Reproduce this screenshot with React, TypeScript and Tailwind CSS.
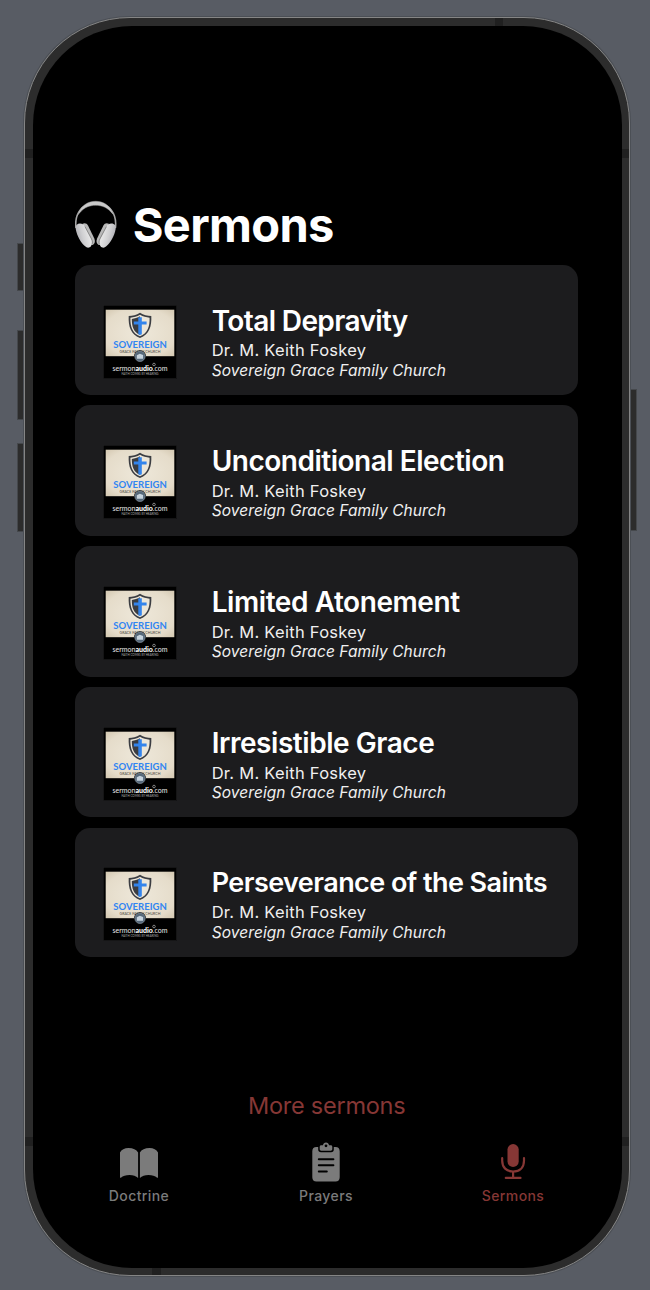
import React from "react";

const regular = "text-[28px] leading-[32px]";

const sermons = [
  { title: "Total Depravity", text: regular + " tracking-[-0.62px]", height: "h-[130.500px] pt-[40px]" },
  { title: "Unconditional Election", text: regular + " tracking-[-0.49px]", height: "h-[130.500px] pt-[40px]" },
  { title: "Limited Atonement", text: regular + " tracking-[-0.43px]", height: "h-[130.500px] pt-[40px]" },
  { title: "Irresistible Grace", text: regular + " tracking-[-0.45px]", height: "h-[130.500px] pt-[40px]" },
  { title: "Perseverance of the Saints", text: "text-[27px] leading-[32px] tracking-[-0.560px]", height: "h-[129.500px] pt-[39px]" },
];

function Cup() {
  return (
    <g>
      <path d="M7.500 23.800c2.200-1.300 4.200-.6 5.500 1.600l6.200 12.800c1.200 2.800.8 5-.8 6.200-1.700 1.200-3.700.5-5-1.500z" fill="#b9b9b9" />
      <path d="M.8 29.200c-.9-3.300 1-5.700 4.200-5.700 2.300 0 3.700 1 4.700 2.800l6.300 12.200c1.500 2.900 1.400 5.600-.1 7.700-1.500 1.900-4 1.900-5.800.1C5.600 42.300 2 35.800.8 29.200z" fill="url(#cup)" />
      <path d="M10 26.600 16.500 38.900c1.100 2.200 1.100 4 .4 5.500" fill="none" stroke="#777" strokeWidth=".8" />
    </g>
  );
}

function Headphones() {
  return (
    <svg className="h-[50px] w-[43px] shrink-0" viewBox="0 0 43 50" fill="none">
      <defs>
        <linearGradient id="cup" x1="0" y1=".6" x2=".8" y2=".3">
          <stop offset="0" stopColor="#a9a9af" />
          <stop offset="0.5" stopColor="#cfcfd1" />
          <stop offset="1" stopColor="#e8e8e8" />
        </linearGradient>
      </defs>
      <path d="M1 28C-.8 14 7 3 20.700 3S42.200 14 40.400 28" stroke="#a5a5a5" strokeWidth="1.600" />
      <path d="M3 14.500C6 5.500 13 1.300 20.700 1.300s14.700 4.200 17.700 13.200l-2.300-2.200C32.500 7.500 26.800 5.300 20.700 5.300S8.900 7.500 5.300 12.300z" fill="#c9c9c9" stroke="#a2a2a2" strokeWidth=".5" />
      <Cup />
      <g transform="translate(41.400 0) scale(-1 1)">
        <Cup />
      </g>
    </svg>
  );
}

function Artwork() {
  return (
    <svg className="h-[74px] w-[74px] shrink-0" viewBox="0 0 74 74">
      <defs>
        <radialGradient id="paper" r=".75">
          <stop offset="0" stopColor="#eee8da" />
          <stop offset=".7" stopColor="#e5dcca" />
          <stop offset="1" stopColor="#cfc3ab" />
        </radialGradient>
      </defs>
      <rect x=".3" y=".3" width="73.400" height="73.400" fill="#000" stroke="#222224" strokeWidth=".5" />
      <rect x="2.700" y="4.700" width="68.600" height="46.500" fill="url(#paper)" />
      <path d="M37 7.800C33.500 10 29.500 11 25.700 11.100c-.5 10.500 2 18.500 11.300 21.900 9.300-3.400 11.800-11.400 11.300-21.900C44.500 11 40.500 10 37 7.800z" fill="#3b3d42" />
      <path d="M37 9.800c-3 1.700-6.300 2.700-9.600 2.900-.2 9 2 15.700 9.600 18.500 7.600-2.800 9.800-9.500 9.600-18.500-3.300-.2-6.600-1.200-9.600-2.900z" fill="#ece6d9" />
      <path d="M37 11.300c-2.600 1.400-5.300 2.300-8.200 2.600 0 7.600 1.800 13.200 8.200 15.800z" fill="#3b3d42" />
      <path d="M35.300 12.300h3.500v4.200h4.800v3h-4.800v9.800L37 30l-1.700-.7v-9.800h-4.500v-3h4.500z" fill="#3384ec" />
      <text x="37" y="43.200" textAnchor="middle" textLength="53.500" lengthAdjust="spacingAndGlyphs" fontFamily="Lato, sans-serif" fontWeight="700" fontSize="9.800" fill="#3185f2">SOVEREIGN</text>
      <text x="37" y="47.500" textAnchor="middle" textLength="41" lengthAdjust="spacingAndGlyphs" fontFamily="Lato, sans-serif" fontSize="3.800" fill="#4b4943">GRACE FAMILY CHURCH</text>
      <circle cx="37" cy="51.300" r="6" fill="#000" />
      <circle cx="37" cy="51.300" r="5.200" fill="#55687a" stroke="#93a0ab" strokeWidth=".6" />
      <path d="M33.800 53.800v-3.600l3-1.400 3.300 1.200v3.800z" fill="#c6d3de" />
      <text x="9.500" y="65.500" textLength="55" lengthAdjust="spacingAndGlyphs" fontFamily="Lato, sans-serif" fontSize="7.800" fill="#e6e6e6">sermon<tspan fontWeight="900" fill="#fff">audio</tspan>.com</text>
      <circle cx="51" cy="59.500" r="1.300" fill="none" stroke="#ccc" strokeWidth=".6" />
      <text x="37" y="69.500" textAnchor="middle" textLength="37" lengthAdjust="spacingAndGlyphs" fontFamily="Lato, sans-serif" fontSize="2.800" fill="#aaa">FAITH COMES BY HEARING</text>
    </svg>
  );
}

function BookIcon() {
  return (
    <svg className="h-[40px] w-[44px]" viewBox="0 0 44 40" fill="#7b7b7b">
      <path d="M3 10.500C4.500 7.500 7.500 6 11.500 6c4.500 0 8 1.600 9.600 4.500v25.400c-2-1.900-5-2.900-8.600-2.900-3.700 0-6.600 1-8.600 2.700-.4.300-.9.200-.9-.4z" />
      <path d="M41 10.500C39.500 7.500 36.500 6 32.500 6c-4.500 0-8 1.600-9.600 4.500v25.400c2-1.900 5-2.900 8.600-2.900 3.700 0 6.600 1 8.600 2.700.4.300.9.200.9-.4z" />
    </svg>
  );
}

function ClipboardIcon() {
  return (
    <svg className="h-[40px] w-[44px]" viewBox="0 0 44 40">
      <path d="M14.200 5H12.500C9.800 5 8.300 6.500 8.300 9.200v26c0 2.700 1.500 4.300 4.200 4.300h19c2.700 0 4.200-1.600 4.200-4.300v-26c0-2.700-1.500-4.200-4.200-4.200h-1.700v2.500c0 1.700-1 2.700-2.700 2.700H17c-1.700 0-2.800-1-2.800-2.700z" fill="#7b7b7b" />
      <path fillRule="evenodd" d="M17.300 3.300h1.600C19.200 1.600 20.400.5 22 .5s2.800 1.100 3.100 2.800h1.600c1 0 1.600.6 1.600 1.600v2.200c0 1-.6 1.600-1.600 1.600h-9.400c-1 0-1.600-.6-1.600-1.600V4.900c0-1 .6-1.600 1.600-1.600zM22 2.400a1.400 1.400 0 1 0 0 2.800 1.400 1.400 0 0 0 0-2.800z" fill="#7b7b7b" />
      <path d="M14.800 17.200h14.600M14.800 23.300h14.600M14.800 29.500h8" stroke="#000" strokeWidth="2" strokeLinecap="round" />
    </svg>
  );
}

function MicIcon() {
  return (
    <svg className="h-[40px] w-[44px]" viewBox="0 0 44 40" fill="none" stroke="#863735" strokeWidth="2.200" strokeLinecap="round">
      <rect x="16.500" y="2" width="11.200" height="23" rx="5.600" fill="#863735" stroke="none" />
      <path d="M11.200 16.200v2.500c0 6.700 4.300 10.800 10.900 10.800S33 25.400 33 18.700v-2.500M22.100 30v5.700M14.800 35.900h14.700" />
    </svg>
  );
}

function Tab({ label, color, children }: { label: string; color: string; children: React.ReactNode }) {
  return (
    <button className="flex w-[187px] flex-col items-center">
      {children}
      <span className={"mt-[5px] text-[14px] leading-[18px] font-medium tracking-[0.4px] " + color}>{label}</span>
    </button>
  );
}

const hardware = "absolute bg-[#2c2c2c] border border-[#45484c]";
const band = "absolute bg-[#202020]";

export default function App() {
  return (
    <div className="relative h-[1290px] w-[650px] overflow-hidden bg-[#585c64] px-[24px] pt-[17px] font-['Inter',sans-serif]">
      <div className={hardware + " left-[17px] top-[243px] h-[48px] w-[8px]"} />
      <div className={hardware + " left-[17px] top-[330px] h-[90px] w-[8px]"} />
      <div className={hardware + " left-[17px] top-[443px] h-[89px] w-[8px]"} />
      <div className={hardware + " left-[629px] top-[389px] h-[142px] w-[8px]"} />

      <div className="relative h-[1259px] w-[606px] overflow-hidden rounded-[106px] border border-[#858585] bg-[#2c2c2c] p-[7px] pt-[8px] shadow-[0_0_0_1px_#4b4f55]">
        <div className={band + " left-0 top-[131px] h-[9px] w-[8px]"} />
        <div className={band + " right-0 top-[131px] h-[9px] w-[8px]"} />
        <div className={band + " left-0 top-[1119px] h-[9px] w-[8px]"} />
        <div className={band + " right-0 top-[1119px] h-[9px] w-[8px]"} />
        <div className={band + " left-[470px] top-0 h-[8px] w-[8px]"} />
        <div className={band + " bottom-0 left-[127px] h-[8px] w-[9px]"} />

        <main className="relative ml-[0.600px] flex h-[1242px] w-[589px] flex-col rounded-[99px] bg-black pl-[42.100px] pt-[174px]">
          <header className="flex h-[50px] items-center">
            <Headphones />
            <h1 className="ml-[15px] text-[47px] leading-[50px] font-bold tracking-[-0.65px] whitespace-nowrap text-white">Sermons</h1>
          </header>

          <section className="mt-[14.500px] flex w-[503.500px] flex-col gap-[10.300px]">
            {sermons.map((s) => (
              <article key={s.title} className={"flex items-start rounded-[15px] bg-[#1c1c1e] pl-[28.500px] " + s.height}>
                <Artwork />
                <div className="ml-[34.500px] whitespace-nowrap text-white">
                  <h2 className={"font-semibold " + s.text}>{s.title}</h2>
                  <p className="mt-[4.700px] text-[16.500px] leading-[19.500px] tracking-[0.27px] text-[#f0f0f0]">Dr. M. Keith Foskey</p>
                  <p className="text-[15.500px] leading-[19.300px] italic tracking-[0.08px] text-[#f0f0f0]">Sovereign Grace Family Church</p>
                </div>
              </article>
            ))}
          </section>

          <button className="mt-[132.700px] w-[503px] pl-[1px] text-center text-[23.500px] leading-[32px] tracking-[-0.25px] text-[#863735]">More sermons</button>
          <nav className="mt-[20.300px] flex -ml-[29.200px]">
            <Tab label="Doctrine" color="text-[#7b7b7b]"><BookIcon /></Tab>
            <Tab label="Prayers" color="text-[#7b7b7b]"><ClipboardIcon /></Tab>
            <Tab label="Sermons" color="text-[#863735]"><MicIcon /></Tab>
          </nav>
        </main>
      </div>
    </div>
  );
}
